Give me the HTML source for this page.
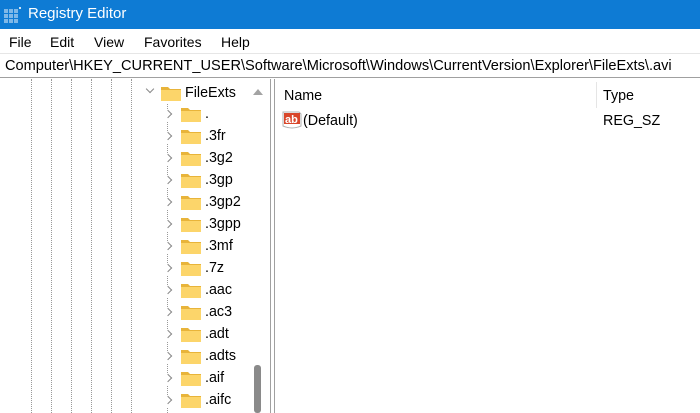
<!DOCTYPE html>
<html><head><meta charset="utf-8"><style>
*{margin:0;padding:0;box-sizing:border-box}
html,body{width:700px;height:413px;overflow:hidden}
body{background:#fff;font-family:"Liberation Sans",sans-serif;font-size:14px;color:#000;position:relative}
.abs{position:absolute}
#title{left:0;top:0;width:700px;height:29px;background:#0e7bd4;color:#fff;font-size:15px}
.menu span{position:absolute;top:34px;font-size:14px}
#addr{left:0;top:53px;width:700px;height:25px;border-top:1px solid #e6e6e6;border-bottom:1px solid #a0a0a0;font-size:14.6px;line-height:24px;padding-left:5px;white-space:nowrap;overflow:hidden}
.dot{position:absolute;top:79px;height:334px;width:0;border-left:1px dotted #999}
.chev{position:absolute;width:6px;height:6px;border-right:1px solid #888;border-bottom:1px solid #888}
.fold{position:absolute;width:20px;height:15px}
.lbl{position:absolute;font-size:14.3px}
</style></head><body>
<div id="title" class="abs">
<svg class="abs" style="left:4px;top:7px" width="18" height="16"><g fill="#7fb8e8"><rect x="0" y="2" width="4" height="4"/><rect x="5" y="2" width="4" height="4"/><rect x="10" y="2" width="4" height="4"/><rect x="0" y="7" width="4" height="4"/><rect x="5" y="7" width="4" height="4"/><rect x="10" y="7" width="4" height="4"/><rect x="0" y="12" width="4" height="4"/><rect x="5" y="12" width="4" height="4"/><rect x="10" y="12" width="4" height="4"/></g><rect x="15" y="0" width="2" height="2" fill="#cfe6f7"/></svg>
<span class="abs" style="left:28px;top:5px">Registry Editor</span></div>
<div class="menu"><span style="left:9px">File</span><span style="left:50px">Edit</span><span style="left:94px">View</span><span style="left:144px">Favorites</span><span style="left:221px">Help</span></div>
<div id="addr" class="abs">Computer\HKEY_CURRENT_USER\Software\Microsoft\Windows\CurrentVersion\Explorer\FileExts\.avi</div>
<div class="dot" style="left:31px"></div><div class="dot" style="left:51px"></div><div class="dot" style="left:71px"></div><div class="dot" style="left:91px"></div><div class="dot" style="left:111px"></div><div class="dot" style="left:131px"></div><div class="dot" style="left:167px;top:104px;height:309px"></div>
<div id="tree"></div>
<div class="abs" style="left:250px;top:79px;width:19px;height:334px;background:#fff"></div>
<svg class="abs" style="left:253px;top:88px" width="10" height="8"><path d="M0 7 L5 1 L10 7Z" fill="#a3a3a3"/></svg>
<div class="abs" style="left:254px;top:365px;width:7px;height:48px;background:#8a8a8a;border-radius:3px"></div>
<div class="abs" style="left:270px;top:79px;width:1px;height:334px;background:#a0a0a0"></div>
<div class="abs" style="left:274px;top:79px;width:1px;height:334px;background:#a0a0a0"></div>
<span class="abs" style="left:284px;top:88px;font-size:14.3px">Name</span>
<div class="abs" style="left:596px;top:82px;width:1px;height:26px;background:#e5e5e5"></div>
<span class="abs" style="left:603px;top:88px;font-size:14.3px">Type</span>
<svg class="abs" style="left:282px;top:111px" width="20" height="19"><path d="M1 1 H17 L19 3 V15 Q10 19 1 15Z" fill="#fff" stroke="#b0b0b0"/><rect x="2" y="2" width="16" height="11" fill="#d9462a"/><text x="3" y="12" font-family="Liberation Sans" font-weight="bold" font-size="11" fill="#fff">ab</text></svg>
<span class="abs" style="left:303px;top:113px;font-size:14.3px">(Default)</span>
<span class="abs" style="left:603px;top:113px;font-size:14.3px">REG_SZ</span>
<script>
var n=[".",".3fr",".3g2",".3gp",".3gp2",".3gpp",".3mf",".7z",".aac",".ac3",".adt",".adts",".aif",".aifc"];
var h='';
function folder(x,y){return '<svg class="fold" style="left:'+x+'px;top:'+y+'px" width="20" height="15"><path d="M0 1 H7 L9 3 H20 V15 H0Z" fill="#e8b43a"/><rect x="0" y="4" width="20" height="11" fill="#fcd56a"/></svg>';}
h+='<div class="chev" style="left:147px;top:86px;transform:rotate(45deg)"></div>'+folder(161,86)+'<span class="lbl" style="left:185px;top:85px">FileExts</span>';
for(var i=0;i<n.length;i++){var y=107+i*22;
h+='<div class="abs" style="left:166px;top:'+(y+2)+'px;width:5px;height:12px;background:#fff"></div><div class="chev" style="left:165px;top:'+(y+4)+'px;transform:rotate(-45deg)"></div>'+folder(181,y)+'<span class="lbl" style="left:205px;top:'+(y-1)+'px">'+n[i]+'</span>';}
document.getElementById('tree').innerHTML=h;
</script>
</body></html>
